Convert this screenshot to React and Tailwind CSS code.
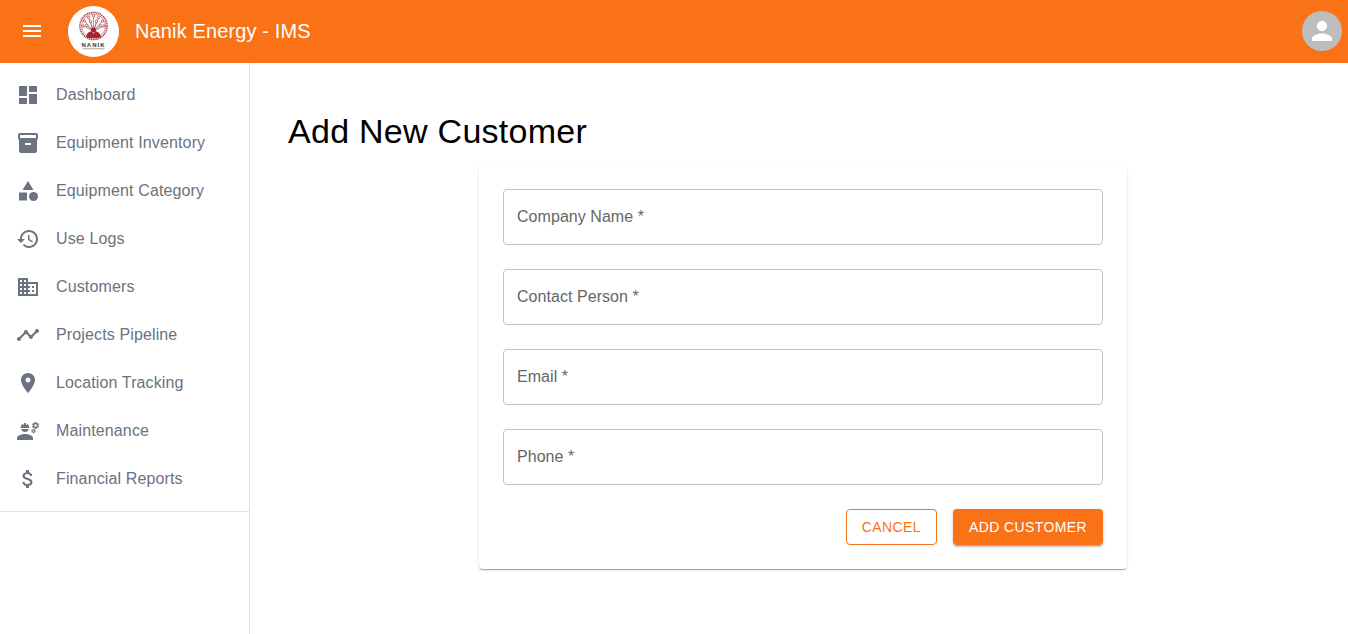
import React from 'react';

const GEAR = "M22.1 6.84c.01-.11.02-.22.02-.34 0-.12-.01-.23-.03-.34l.74-.58c.07-.05.08-.15.04-.22l-.7-1.21c-.04-.08-.14-.1-.21-.08l-.86.35c-.18-.14-.38-.25-.59-.34l-.13-.93c-.01-.08-.08-.14-.17-.14h-1.4c-.09 0-.16.06-.17.15l-.13.93c-.21.09-.41.21-.59.34l-.87-.35c-.08-.03-.17 0-.21.08l-.7 1.21c-.04.08-.03.17.04.22l.74.58c-.02.11-.03.23-.03.34 0 .11.01.23.03.34l-.74.58c-.07.05-.08.15-.04.22l.7 1.21c.04.08.14.1.21.08l.87-.35c.18.14.38.25.59.34l.13.93c.01.09.08.15.17.15h1.4c.09 0 .16-.06.17-.15l.13-.93c.21-.09.41-.21.59-.34l.87.35c.08.03.17 0 .21-.08l.7-1.21c.04-.08.03-.17-.04-.22l-.73-.58zm-2.6.91c-.69 0-1.25-.56-1.25-1.25s.56-1.25 1.25-1.25 1.25.56 1.25 1.25-.56 1.25-1.25 1.25z";

const ICONS = {
  dashboard: <path d="M3 13h8V3H3v10zm0 8h8v-6H3v6zm10 0h8V11h-8v10zm0-18v6h8V3h-8z" />,
  inventory: <path d="M20 2H4c-1 0-2 .9-2 2v3.01c0 .72.43 1.34 1 1.69V20c0 1.1 1.1 2 2 2h14c.9 0 2-.9 2-2V8.7c.57-.35 1-.97 1-1.69V4c0-1.1-1-2-2-2zm-5 12H9v-2h6v2zm5-7H4V4l16-.02V7z" />,
  category: (
    <>
      <path d="M12 2l-5.5 9h11z" />
      <circle cx="17.5" cy="17.5" r="4.5" />
      <path d="M3 13.5h8v8H3z" />
    </>
  ),
  history: <path d="M13 3c-4.97 0-9 4.03-9 9H1l3.89 3.89.07.14L9 12H6c0-3.87 3.13-7 7-7s7 3.13 7 7-3.13 7-7 7c-1.93 0-3.68-.79-4.94-2.06l-1.42 1.42C8.27 19.99 10.51 21 13 21c4.97 0 9-4.03 9-9s-4.03-9-9-9zm-1 5v5l4.28 2.54.72-1.21-3.5-2.08V8H12z" />,
  business: <path d="M12 7V3H2v18h20V7H12zM6 19H4v-2h2v2zm0-4H4v-2h2v2zm0-4H4V9h2v2zm0-4H4V5h2v2zm4 12H8v-2h2v2zm0-4H8v-2h2v2zm0-4H8V9h2v2zm0-4H8V5h2v2zm10 12h-8v-2h2v-2h-2v-2h2v-2h-2V9h8v10zm-2-8h-2v2h2v-2zm0 4h-2v2h2v-2z" />,
  timeline: <path d="M23 8c0 1.1-.9 2-2 2-.18 0-.35-.02-.51-.07l-3.56 3.55c.05.16.07.34.07.52 0 1.1-.9 2-2 2s-2-.9-2-2c0-.18.02-.36.07-.52l-2.55-2.55c-.16.05-.34.07-.52.07s-.36-.02-.52-.07l-4.55 4.56c.05.16.07.33.07.51 0 1.1-.9 2-2 2s-2-.9-2-2 .9-2 2-2c.18 0 .35.02.51.07l4.56-4.55C8.02 9.36 8 9.18 8 9c0-1.1.9-2 2-2s2 .9 2 2c0 .18-.02.36-.07.52l2.55 2.55c.16-.05.34-.07.52-.07s.36.02.52.07l3.55-3.56C19.02 8.35 19 8.18 19 8c0-1.1.9-2 2-2s2 .9 2 2z" />,
  location: <path d="M12 2C8.13 2 5 5.13 5 9c0 5.25 7 13 7 13s7-7.75 7-13c0-3.87-3.13-7-7-7zm0 9.5c-1.38 0-2.5-1.12-2.5-2.5s1.12-2.5 2.5-2.5 2.5 1.12 2.5 2.5-1.12 2.5-2.5 2.5z" />,
  engineering: (
    <>
      <path d="M9 15c-2.67 0-8 1.34-8 4v2h16v-2c0-2.66-5.33-4-8-4z" />
      <path d="M4.74 9h8.53c.27 0 .49-.22.49-.49v-.02c0-.27-.22-.49-.49-.49H13c0-1.48-.81-2.75-2-3.45v.95c0 .28-.22.5-.5.5s-.5-.22-.5-.5V4.14C9.68 4.06 9.35 4 9 4s-.68.06-1 .14V5.5c0 .28-.22.5-.5.5S7 5.78 7 5.5v-.95C5.81 5.25 5 6.52 5 8h-.26c-.27 0-.49.22-.49.49v.03c0 .26.22.48.49.48z" />
      <path d="M9 13c1.86 0 3.41-1.28 3.86-3H5.14c.45 1.72 2 3 3.86 3z" />
      <path d={GEAR} />
      <g transform="translate(4.825 7.775) scale(.65)">
        <path d={GEAR} />
      </g>
    </>
  ),
  money: <path d="M11.8 10.9c-2.27-.59-3-1.2-3-2.15 0-1.09 1.01-1.85 2.7-1.85 1.78 0 2.44.85 2.5 2.1h2.21c-.07-1.72-1.12-3.3-3.21-3.81V3h-3v2.16c-1.94.42-3.5 1.68-3.5 3.61 0 2.31 1.91 3.46 4.7 4.13 2.5.6 3 1.48 3 2.41 0 .69-.49 1.79-2.7 1.79-2.06 0-2.87-.92-2.98-2.1h-2.2c.12 2.19 1.76 3.5 3.68 3.91V21h3v-2.15c1.95-.37 3.5-1.5 3.5-3.55 0-2.84-2.43-3.81-4.7-4.4z" />,
};

const NAV_ITEMS = [
  { label: 'Dashboard', icon: 'dashboard' },
  { label: 'Equipment Inventory', icon: 'inventory' },
  { label: 'Equipment Category', icon: 'category' },
  { label: 'Use Logs', icon: 'history' },
  { label: 'Customers', icon: 'business' },
  { label: 'Projects Pipeline', icon: 'timeline' },
  { label: 'Location Tracking', icon: 'location' },
  { label: 'Maintenance', icon: 'engineering' },
  { label: 'Financial Reports', icon: 'money' },
];

const FIELDS = ['Company Name', 'Contact Person', 'Email', 'Phone'];

// tips of the tree branches inside the logo ring
const LOGO_NODES = [
  [25.5, 10], [20.5, 11.5], [30.5, 11.5], [16.5, 15], [34.5, 15],
  [15, 20], [36, 20], [22.5, 15.5], [28.5, 15.5], [18.5, 19.5], [32.5, 19.5],
];

const Icon = ({ name }) => (
  <svg viewBox="0 0 24 24" className="w-6 h-6 shrink-0 fill-current">
    {ICONS[name]}
  </svg>
);

// Circular company mark, small tree inside a red ring
const Logo = () => (
  <div className="w-[51px] h-[51px] rounded-full bg-white shrink-0">
    <svg viewBox="0 0 51 51" className="w-[51px] h-[51px]">
      <circle cx="25.5" cy="20" r="13.6" fill="none" stroke="#a8323a" strokeWidth="1.4" strokeDasharray="1.3 0.6" />
      <circle cx="25.5" cy="20" r="12" fill="none" stroke="#c05a60" strokeWidth="0.7" />
      {LOGO_NODES.map(([x, y]) => (
        <g key={`${x}-${y}`}>
          <path d={`M25.5 25L${x} ${y}`} stroke="#b9555a" strokeWidth="0.7" fill="none" />
          <circle cx={x} cy={y} r="1.2" fill="#fff" stroke="#a8323a" strokeWidth="0.7" />
        </g>
      ))}
      <path d="M18 31c.5-4 3.5-5.5 5-5.5s1.5 2 2.5 2 1-2 2.5-2 4.5 1.5 5 5.5c-4 1.8-11 1.8-15 0z" fill="#a8232c" />
      <circle cx="25.5" cy="24" r="2.6" fill="#a8232c" />
      <text x="25.5" y="40.5" textAnchor="middle" fontSize="6" fontWeight="700" letterSpacing="1" fill="#333" fontFamily="Liberation Sans, sans-serif">NANIK</text>
      <rect x="14.5" y="42.3" width="22" height="1" fill="#a0a0a0" />
    </svg>
  </div>
);

const Field = ({ label }) => (
  <input
    type="text"
    placeholder={`${label} *`}
    className="w-full h-14 px-[13px] rounded border border-[#c4c4c4] bg-white text-base tracking-[0.05px] outline-none placeholder:text-[#666666]"
  />
);

const App = () => {
  return (
    <div className="h-[634px] flex flex-col bg-white text-black overflow-hidden font-['Liberation_Sans',Arial,sans-serif]">
      {/* Header */}
      <header className="h-[63px] shrink-0 flex items-center pl-5 pr-1.5 bg-[#f97316] text-white">
        <svg viewBox="0 0 24 24" className="w-6 h-6 -mt-px fill-current">
          <path d="M3 18h18v-2H3v2zm0-5h18v-2H3v2zm0-7v2h18V6H3z" />
        </svg>
        <div className="ml-6">
          <Logo />
        </div>
        <h1 className="ml-4 text-xl tracking-[0.13px] leading-8 -mt-0.5">Nanik Energy - IMS</h1>
        <div className="ml-auto -mt-px w-10 h-10 rounded-full bg-[#bdbdbd] flex items-center justify-center">
          <svg viewBox="0 0 24 24" className="w-[30px] h-[30px] fill-current">
            <path d="M12 12c2.21 0 4-1.79 4-4s-1.79-4-4-4-4 1.79-4 4 1.79 4 4 4zm0 2c-2.67 0-8 1.34-8 4v2h16v-2c0-2.66-5.33-4-8-4z" />
          </svg>
        </div>
      </header>

      <div className="flex flex-1 min-h-0">
        {/* Sidebar */}
        <aside className="w-[250px] shrink-0 border-r border-[#e0e0e0]">
          <nav className="py-2 border-b border-[#e0e0e0]">
            {NAV_ITEMS.map((item) => (
              <div key={item.label} className="h-12 flex items-center gap-4 px-4 text-[#6b7280]">
                <Icon name={item.icon} />
                <span className="text-base tracking-[0.13px]">{item.label}</span>
              </div>
            ))}
          </nav>
        </aside>

        {/* Main */}
        <main className="flex-1 min-w-0 pt-12 pl-[38px] pr-[30px]">
          <h2 className="text-[34px] tracking-[0.27px] leading-10 mb-3.5">Add New Customer</h2>
          <form className="w-[648px] mx-auto p-6 rounded bg-white shadow-[0_2px_1px_-1px_rgba(0,0,0,0.2),0_1px_1px_0_rgba(0,0,0,0.14),0_1px_3px_0_rgba(0,0,0,0.12)]">
            <div className="flex flex-col gap-6">
              {FIELDS.map((field) => (
                <Field key={field} label={field} />
              ))}
            </div>
            <div className="flex justify-end gap-4 mt-6">
              <button type="button" className="h-9 px-[15px] rounded border border-[#f97316] text-[#f97316] text-sm tracking-[0.4px]">
                CANCEL
              </button>
              <button type="button" className="h-9 px-4 rounded bg-[#f97316] text-white text-sm tracking-[0.4px] shadow-[0_3px_1px_-2px_rgba(0,0,0,0.2),0_2px_2px_0_rgba(0,0,0,0.14),0_1px_5px_0_rgba(0,0,0,0.12)]">
                ADD CUSTOMER
              </button>
            </div>
          </form>
        </main>
      </div>
    </div>
  );
};

export default App;
